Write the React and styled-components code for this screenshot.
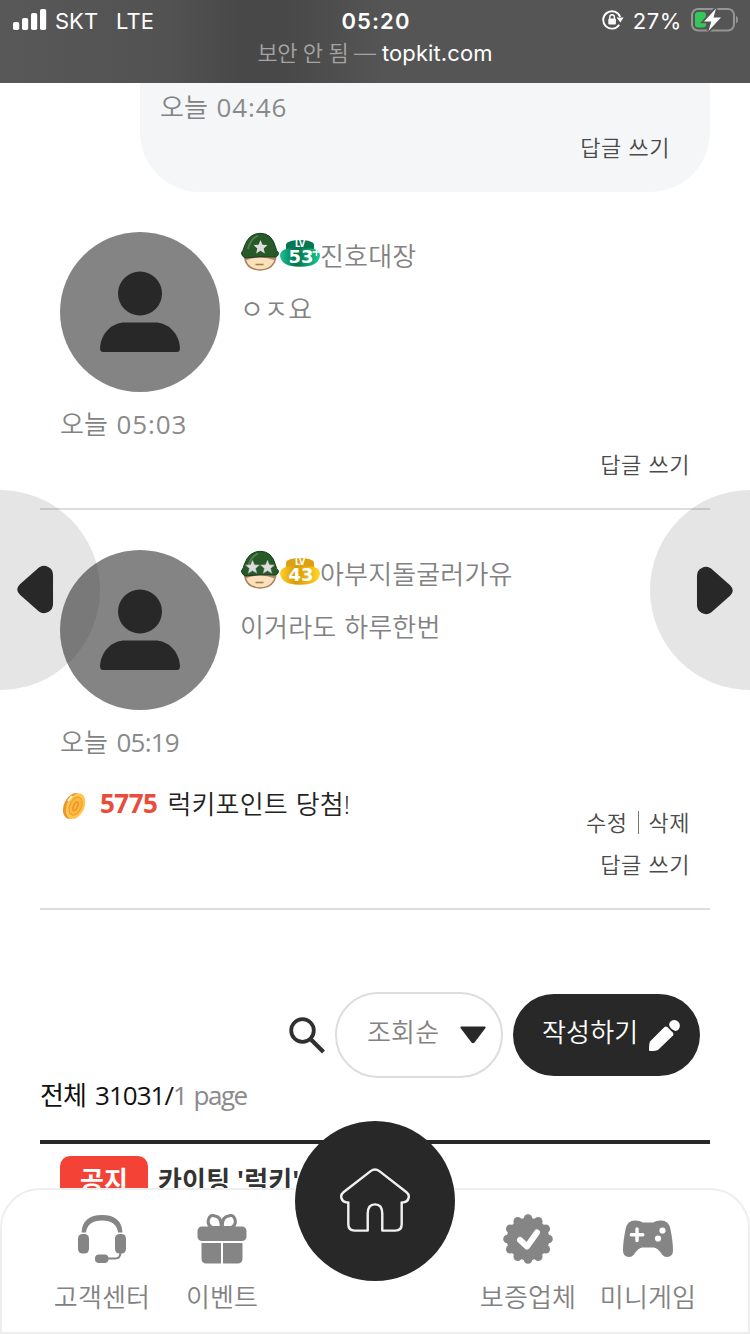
import React from "react";
import styled, { createGlobalStyle } from "styled-components";

const comments = [
  {
    id: 1,
    stars: 1,
    level: 53,
    color: "green",
    name: "진호대장",
    text: "ㅇㅈ요",
    time: "05:03",
    spacing: 0.9,
  },
  {
    id: 2,
    stars: 2,
    level: 43,
    color: "gold",
    name: "아부지돌굴러가유",
    text: "이거라도 하루한번",
    time: "05:19",
    spacing: -0.8,
    point: 5775,
    mine: true,
  },
];

function Signal() {
  return (
    <svg width="34" height="22" viewBox="0 0 34 22" fill="#fff">
      <rect x="0" y="13" width="6.2" height="8" rx="1.8" />
      <rect x="9" y="9" width="6.2" height="12" rx="1.8" />
      <rect x="18" y="4" width="6.2" height="17" rx="1.8" />
      <rect x="27" y="0" width="6.2" height="21" rx="1.8" />
    </svg>
  );
}

function RotationLock() {
  return (
    <svg width="22" height="22" viewBox="0 0 22 22">
      <path
        d="M17.2 15.7A8.7 8.7 0 1 1 18.1 8"
        fill="none"
        stroke="#fff"
        strokeWidth="1.9"
      />
      <path d="M14.6 8.4h7l-3.3 5z" fill="#fff" />
      <rect x="6.3" y="9.4" width="7.6" height="6" rx="1" fill="#fff" />
      <path
        d="M7.8 10V8a2.3 2.3 0 0 1 4.6 0v2"
        fill="none"
        stroke="#fff"
        strokeWidth="1.4"
      />
    </svg>
  );
}

function Battery() {
  return (
    <svg width="48" height="26" viewBox="0 0 48 26">
      <rect
        x="1"
        y="2"
        width="42"
        height="21.5"
        rx="6"
        fill="none"
        stroke="#969696"
        strokeWidth="2"
      />
      <path d="M45 9v7.500q2-.7 2-3.700t-2-3.800z" fill="#969696" />
      <rect x="4" y="5" width="11" height="15.500" rx="3" fill="#34c759" />
      <path
        d="M25 1.500 13 14.500h7.300l-2.800 9.500L30 10.500h-7.500z"
        fill="#fff"
        stroke="#555"
        strokeWidth="3.500"
        paintOrder="stroke"
      />
    </svg>
  );
}

function Person() {
  return (
    <svg width="82" height="82" viewBox="0 0 82 82" fill="#282828">
      <circle cx="41" cy="22.500" r="22" />
      <path d="M1 77C2 62 13 51.500 26 51.500h30c13 0 24 10.500 25 25.500q0 4-3 4H4q-3 0-3-4z" />
    </svg>
  );
}

const STAR =
  "M0-7 2-2.300 7-2 3.200 1.400 4.400 6.400 0 3.700-4.400 6.400-3.200 1.400-7-2-2-2.300z";

function Helmet({ stars }) {
  return (
    <svg width="40" height="40" viewBox="0 0 40 40">
      <path
        d="M4.500 23h31.500q-1 14.500-16 15Q5 37.500 4.500 23z"
        fill="#fbe0bc"
        stroke="#a98259"
        strokeWidth="1.500"
      />
      <path d="M5.500 28.500q14-6 29.500 0l.8-6H4.500z" fill="#b08a72" />
      <path d="M15.500 32.500h8" stroke="#a17f42" strokeWidth="1.500" />
      <path
        d="M1.500 21Q3.500 18 4.500 14 9 1.300 20.500 1.300 32 1.500 35.500 15q.8 4 3 6 0 3-3 4Q20 24 5 26q-3.500-2-3.500-5z"
        fill="#275929"
        stroke="#153e1a"
      />
      <path
        d="M8 17Q10.500 6.500 18 3.500"
        fill="none"
        stroke="#659a5d"
        strokeWidth="2"
        opacity=".6"
      />
      {stars === 1 ? (
        <path d={STAR} transform="translate(20.500 15)" fill="#dedede" />
      ) : (
        <g fill="#dedede" stroke="#8c9a8b" strokeWidth=".5">
          <path d={STAR} transform="translate(12.500 17)" />
          <path d={STAR} transform="translate(27.500 17)" />
        </g>
      )}
    </svg>
  );
}

function Level({ value, color }) {
  const gold = color === "gold";
  return (
    <svg width="40" height="30" viewBox="0 0 40 30">
      <defs>
        <linearGradient id={`lv-${color}`} x1="0" x2="1">
          <stop offset="0" stopColor={gold ? "#ffd02c" : "#18c497"} />
          <stop offset=".4" stopColor={gold ? "#d99a00" : "#05704b"} />
          <stop offset="1" stopColor={gold ? "#ffd52e" : "#16ca97"} />
        </linearGradient>
      </defs>
      <path
        d="M6 11V5q3-4 14-4t14 4v6z"
        fill={gold ? "#dca011" : "#087553"}
      />
      <path
        d="M0 17q0-7 9-7.500h22q9 .5 9 7.500-1 7-9 9.500-11 2.500-22 0Q1 24 0 17z"
        fill={`url(#lv-${color})`}
      />
      <LevelText x="20" y="8" $size={8}>
        LV
      </LevelText>
      <LevelText
        x="21"
        y="24"
        $size={17.5}
        textLength="25"
        lengthAdjust="spacingAndGlyphs"
      >
        {value}
      </LevelText>
      {!gold && <path d="M36.500 9v8m-4-4h7" stroke="#fff" strokeWidth="1.300" />}
    </svg>
  );
}

function Coin() {
  return (
    <svg width="28" height="30" viewBox="0 0 28 30">
      <g transform="rotate(24 14 15)">
        <ellipse cx="12.500" cy="15.500" rx="8.500" ry="13.500" fill="#e9962f" />
        <ellipse cx="15.500" cy="14.500" rx="8.800" ry="13.500" fill="#ffc64e" />
        <ellipse
          cx="15.500"
          cy="14.500"
          rx="5.800"
          ry="9.500"
          fill="#fdb93e"
          stroke="#ee9f36"
          strokeWidth="1.200"
        />
        <ellipse
          cx="15.500"
          cy="14.500"
          rx="2"
          ry="4.500"
          fill="none"
          stroke="#e8912d"
          strokeWidth="1.500"
        />
      </g>
      <path d="m8 10 4-5" stroke="#fff4c8" strokeWidth="2" />
    </svg>
  );
}

function Magnifier() {
  return (
    <svg width="36" height="37" viewBox="0 0 36 37" fill="none" stroke="#303030">
      <circle cx="13.500" cy="13.500" r="11.300" strokeWidth="3.800" />
      <path d="m22 22.500 12.500 12.500" strokeWidth="4.200" />
    </svg>
  );
}

function Pencil() {
  return (
    <svg width="31" height="31" viewBox="0 0 31 31" fill="#fff">
      <path d="M1 21.500 15.500 7q1.500-1.200 2.800 0l5.700 5.700q1 1.300 0 2.800L9.500 29.500Q7.500 31 1 31q-1 0-1-1 0-6.500 1-8.500z" />
      <path d="M21.500 1.500q4.500-3 7.700.3t.3 7.700q-1.800 2-3.700 1.300-4.500-2-5.600-5.600-.3-2 1.300-3.700z" />
    </svg>
  );
}

function Headset() {
  return (
    <svg width="50" height="50" viewBox="0 0 50 50" fill="#858585">
      <path d="M4.500 18.500Q5.500 1 25 1t20.500 17.500H41Q39.500 6.500 25 6.500T9 18.500z" />
      <rect x="1" y="20" width="11" height="19.500" rx="4.500" />
      <rect x="38" y="20" width="11" height="19.500" rx="4.500" />
      <path
        d="M43.500 38q0 6.500-5 6.500H30"
        fill="none"
        stroke="#858585"
        strokeWidth="2"
      />
      <rect x="18" y="40.500" width="13.500" height="8.500" rx="4" />
    </svg>
  );
}

function Gift() {
  return (
    <svg width="50" height="50" viewBox="0 0 50 50" fill="#858585">
      <rect x=".5" y="12.500" width="49" height="14.500" rx="4.500" />
      <path d="M4.500 29H24v20.500H9.500q-5 0-5-5zM26 29h19.500v15.500q0 5-5 5H26z" />
      <g fill="none" stroke="#858585" strokeWidth="3">
        <path d="M24 13.500h-9q-5-2.500-3.500-8T18 2q7 1 6 11.500z" />
        <path d="M25.500 13.500h9q5-2.500 3.500-8T31.500 2q-7 1-6 11.500z" />
      </g>
    </svg>
  );
}

function Verified() {
  // twelve rounded teeth around the check
  const teeth = Array.from({ length: 12 }, (_, i) => {
    const a = (i * Math.PI) / 6;
    return { x: 25 + 20.5 * Math.cos(a), y: 25 + 20.5 * Math.sin(a) };
  });
  return (
    <svg width="50" height="50" viewBox="0 0 50 50" fill="#858585">
      <circle cx="25" cy="25" r="21.300" />
      {teeth.map((t, i) => (
        <circle key={i} cx={t.x} cy={t.y} r="4.300" />
      ))}
      <path
        d="m17 26 7 6.500 10-14"
        fill="none"
        stroke="#fff"
        strokeWidth="6"
        strokeLinecap="round"
        strokeLinejoin="round"
      />
    </svg>
  );
}

function Gamepad() {
  return (
    <svg width="50" height="50" viewBox="0 0 50 50">
      <path
        d="M12 6.500q5 0 8 2h10q3-2 8-2 8 0 9.500 9Q50 28 50 36.500q0 6.500-6 6.500-3 0-5-2.500-4-6.500-8-7H19q-4 .5-8 7Q9 43 6 43q-6 0-6-6.500Q0 28 2.500 15.500 4 6.500 12 6.500z"
        fill="#858585"
      />
      <path
        d="M14 15v11.500M8.300 20.800h11.500"
        stroke="#fff"
        strokeWidth="3.400"
        strokeLinecap="round"
      />
      <circle cx="39.500" cy="16.500" r="3.100" fill="#fff" />
      <circle cx="35" cy="24.500" r="3.100" fill="#fff" />
    </svg>
  );
}

function House() {
  return (
    <svg
      width="70"
      height="66"
      viewBox="0 0 72 68"
      fill="none"
      stroke="#f0f0f0"
      strokeWidth="2.500"
      strokeLinejoin="round"
    >
      <path d="M31.500 3.200q4.500-3.400 9 0L68.500 25q3 2.500 2.100 6-1 3.800-5.100 4.400h-2v22.600q0 6.500-6.500 6.500H43.500V47q0-9.500-7.500-9.500T28.500 47v17.500H15q-6.500 0-6.500-6.500V35.400h-2q-4.100-.6-5.100-4.400-.9-3.500 2.100-6z" />
    </svg>
  );
}

function Comment({ comment }) {
  return (
    <CommentItem>
      <CommentTop>
        <Avatar>
          <Person />
        </Avatar>
        <div>
          <Writer>
            <Helmet stars={comment.stars} />
            <Level value={comment.level} color={comment.color} />
            <span>{comment.name}</span>
          </Writer>
          <CommentText>{comment.text}</CommentText>
        </div>
      </CommentTop>
      <Time $spacing={comment.spacing}>
        오늘 <span>{comment.time}</span>
      </Time>
      <CommentFooter>
        {comment.point && (
          <Lucky>
            <Coin />
            <strong>{comment.point}</strong>
            <span>럭키포인트 당첨!</span>
          </Lucky>
        )}
        <Actions>
          {comment.mine && (
            <div>
              수정<Bar />삭제
            </div>
          )}
          <div>답글 쓰기</div>
        </Actions>
      </CommentFooter>
    </CommentItem>
  );
}

function App() {
  return (
    <>
      <GlobalStyle />
      <Screen>
        <Header>
          <StatusBar>
            <Carrier>
              <Signal />
              <span>SKT</span>
              <span>LTE</span>
            </Carrier>
            <Clock>05:20</Clock>
            <Power>
              <RotationLock />
              <span>27%</span>
              <Battery />
            </Power>
          </StatusBar>
          <Address>
            <span>보안 안 됨 —</span> topkit.com
          </Address>
        </Header>

        <Content>
          <ReplyCard>
            <Time $spacing={0.9}>
              오늘 <span>04:46</span>
            </Time>
            <Actions>
              <div>답글 쓰기</div>
            </Actions>
          </ReplyCard>
          {comments.map((comment) => (
            <Comment key={comment.id} comment={comment} />
          ))}

          <Toolbar>
            <Magnifier />
            <SortSelect>
              조회순
              <svg width="26" height="18" viewBox="0 0 26 18" fill="#282828">
                <path d="M1 .5h24q1 .5.500 1.500L14.500 16.500q-1.500 1.500-3 0L.5 2Q0 1 1 .5z" />
              </svg>
            </SortSelect>
            <WriteBtn>
              작성하기
              <Pencil />
            </WriteBtn>
          </Toolbar>

          <Count>
            전체 31031/<span>1 page</span>
          </Count>
          <Notice>
            <NoticeLabel>공지</NoticeLabel>
            <span>카이팅 '럭키'</span>
          </Notice>
        </Content>

        <SideBtn $side="left">
          <svg width="37" height="49" viewBox="0 0 38 50" fill="#282828">
            <path d="M22.500 2.500Q27-1 32.500 2.200 37 4.500 37 10v30q0 5.500-4.500 7.800-5.500 3.200-10-.3L3 30.500q-5.500-5.500 0-11z" />
          </svg>
        </SideBtn>
        <SideBtn $side="right">
          <svg width="37" height="49" viewBox="0 0 38 50" fill="#282828">
            <path d="M15.500 2.500Q11-1 5.500 2.200 1 4.500 1 10v30q0 5.500 4.500 7.800 5.500 3.200 10-.3L35 30.500q5.500-5.500 0-11z" />
          </svg>
        </SideBtn>

        <BottomNav>
          <NavItem>
            <Headset />
            고객센터
          </NavItem>
          <NavItem>
            <Gift />
            이벤트
          </NavItem>
          <HomeBtn>
            <House />
          </HomeBtn>
          <NavItem>
            <Verified />
            보증업체
          </NavItem>
          <NavItem>
            <Gamepad />
            미니게임
          </NavItem>
        </BottomNav>
      </Screen>
    </>
  );
}

const GlobalStyle = createGlobalStyle`
  * {
    box-sizing: border-box;
  }

  body {
    margin: 0;
    background: #fff;
  }

  svg {
    display: block;
    flex: none;
  }
`;

const Screen = styled.div`
  position: relative;
  display: flex;
  flex-direction: column;
  width: 750px;
  height: 1334px;
  overflow: hidden;
  background: #fff;
  color: #828282;
  font-family: "Open Sans", "Noto Sans CJK KR", sans-serif;
  font-size: 26px;
  font-weight: 350;
  letter-spacing: 0.15px;
  white-space: nowrap;
`;

const Header = styled.header`
  flex: none;
  height: 83px;
  background: linear-gradient(
    90deg,
    #585858 0,
    #525252 170px,
    #484848 240px,
    #484848 285px,
    #555 385px
  );
  color: #fff;
  font-family: Inter, "Noto Sans CJK KR", sans-serif;
  font-weight: 400;
`;

const StatusBar = styled.div`
  display: grid;
  grid-template-columns: 1fr auto 1fr;
  align-items: center;
  height: 40px;
  padding: 0 11px 0 13px;
  font-size: 22px;

  span,
  time {
    padding-top: 1px;
  }
`;

const Carrier = styled.div`
  display: flex;
  align-items: center;
  gap: 8px;
  letter-spacing: 0;

  span + span {
    margin-left: 10px;
  }
`;

const Clock = styled.time`
  font-weight: 600;
  letter-spacing: 1.1px;
`;

const Power = styled.div`
  display: flex;
  align-items: center;
  justify-content: flex-end;
  gap: 9px;

  span {
    letter-spacing: 0.6px;
  }
`;

const Address = styled.div`
  height: 26px;
  line-height: 26px;
  text-align: center;
  font-size: 22px;
  letter-spacing: 0.1px;

  span {
    color: #a5a5a5;
    font-weight: 350;
    letter-spacing: -0.4px;
  }
`;

const Content = styled.main`
  flex: 1;
  min-height: 0;
  padding: 0 40px;
`;

const ReplyCard = styled.div`
  height: 109px;
  margin-left: 100px;
  padding: 5px 40px 0 20px;
  border-radius: 0 0 60px 60px;
  background: #f4f6f8;
`;

const Time = styled.div`
  height: 39px;
  line-height: 38px;
  word-spacing: 1.5px;

  span {
    color: #8a8a8a;
    font-weight: 400;
    letter-spacing: ${({ $spacing }) => $spacing}px;
  }
`;

const Actions = styled.div`
  margin-left: auto;
  color: #4a4a4a;
  font-size: 22px;
  letter-spacing: 0.5px;
  line-height: 41px;
  text-align: right;
  word-spacing: 0.5px;

  div {
    height: 42px;
  }
`;

const Bar = styled.i`
  display: inline-block;
  width: 1px;
  height: 23px;
  margin: 0 10px;
  background: #777;
  vertical-align: -3px;
`;

const CommentItem = styled.article`
  padding: 40px 20px 22px;
  border-bottom: 2px solid #ddd;
`;

const CommentTop = styled.div`
  display: flex;
  gap: 20px;
  margin-bottom: 13px;
`;

const Avatar = styled.div`
  display: flex;
  align-items: center;
  justify-content: center;
  width: 160px;
  height: 160px;
  border-radius: 50%;
  background: #848484;
`;

const Writer = styled.div`
  display: flex;
  align-items: center;
  height: 40px;

  svg + svg {
    margin-top: 3px;
  }

  span {
    padding-top: 5px;
  }
`;

const CommentText = styled.div`
  margin-top: 18px;
  line-height: 38px;
  word-spacing: 1px;
`;

const CommentFooter = styled.div`
  display: flex;
  align-items: flex-end;
`;

const Lucky = styled.div`
  display: flex;
  align-items: center;
  height: 124px;
  padding: 22px 0 64px;
  color: #222;
  word-spacing: 1px;

  svg {
    margin-top: 6px;
  }

  strong {
    margin: 0 10px 0 12px;
    color: #e74c3c;
    font-weight: 700;
    letter-spacing: -0.5px;
  }
`;

const Toolbar = styled.div`
  display: flex;
  align-items: center;
  justify-content: flex-end;
  gap: 10px;
  margin-top: 82px;
  padding-right: 10px;
`;

const SortSelect = styled.div`
  display: flex;
  align-items: center;
  justify-content: space-between;
  width: 168px;
  height: 86px;
  padding: 0 15px 8px 30px;
  border: 2px solid #ddd;
  border-radius: 43px;

  svg {
    margin-top: 7px;
  }
`;

const WriteBtn = styled.div`
  display: flex;
  align-items: center;
  justify-content: space-between;
  width: 187px;
  height: 82px;
  padding: 0 20px 8px 29px;
  border-radius: 41px;
  background: #282828;
  color: #fff;

  svg {
    margin-top: 8px;
  }
`;

const Count = styled.div`
  height: 36px;
  line-height: 35px;
  color: #111;
  font-weight: 400;
  letter-spacing: -1px;
  word-spacing: 3.5px;

  span {
    color: #8a8a8a;
    letter-spacing: -1.5px;
    word-spacing: 2px;
  }
`;

const Notice = styled.div`
  display: flex;
  gap: 10px;
  margin-top: 26px;
  padding: 12px 20px;
  border-top: 4px solid #282828;
  color: #333;
  font-weight: 700;
  line-height: 48px;
`;

const NoticeLabel = styled.div`
  width: 88px;
  border-radius: 10px;
  background: #f44336;
  color: #fff;
  text-align: center;
`;

const SideBtn = styled.div`
  position: absolute;
  top: 490px;
  ${({ $side }) => $side}: 0;
  display: flex;
  align-items: center;
  justify-content: ${({ $side }) =>
    $side === "left" ? "flex-start" : "flex-end"};
  width: 100px;
  height: 200px;
  padding: ${({ $side }) => ($side === "left" ? "0 17px 1px" : "1px 17px 0")};
  border-radius: ${({ $side }) =>
    $side === "left" ? "0 100px 100px 0" : "100px 0 0 100px"};
  background: rgba(40, 40, 40, 0.12);
`;

const BottomNav = styled.nav`
  position: absolute;
  right: 0;
  bottom: 0;
  left: 0;
  display: grid;
  grid-template-columns: 120px 120px 186px 120px 120px;
  justify-content: center;
  height: 146px;
  border: 2px solid #eee;
  border-radius: 40px 40px 0 0;
  background: #fff;
`;

const NavItem = styled.div`
  display: flex;
  flex-direction: column;
  align-items: center;
  gap: 14px;
  padding-top: 24px;
  line-height: 39px;
`;

const HomeBtn = styled.div`
  display: flex;
  align-items: center;
  justify-content: center;
  justify-self: center;
  width: 160px;
  height: 160px;
  margin-top: -69px;
  border-radius: 50%;
  background: #282828;
`;

const LevelText = styled.text`
  fill: #fff;
  font-family: "DejaVu Sans", sans-serif;
  font-size: ${({ $size }) => $size}px;
  font-weight: 700;
  letter-spacing: 0;
  text-anchor: middle;
`;

export default App;
